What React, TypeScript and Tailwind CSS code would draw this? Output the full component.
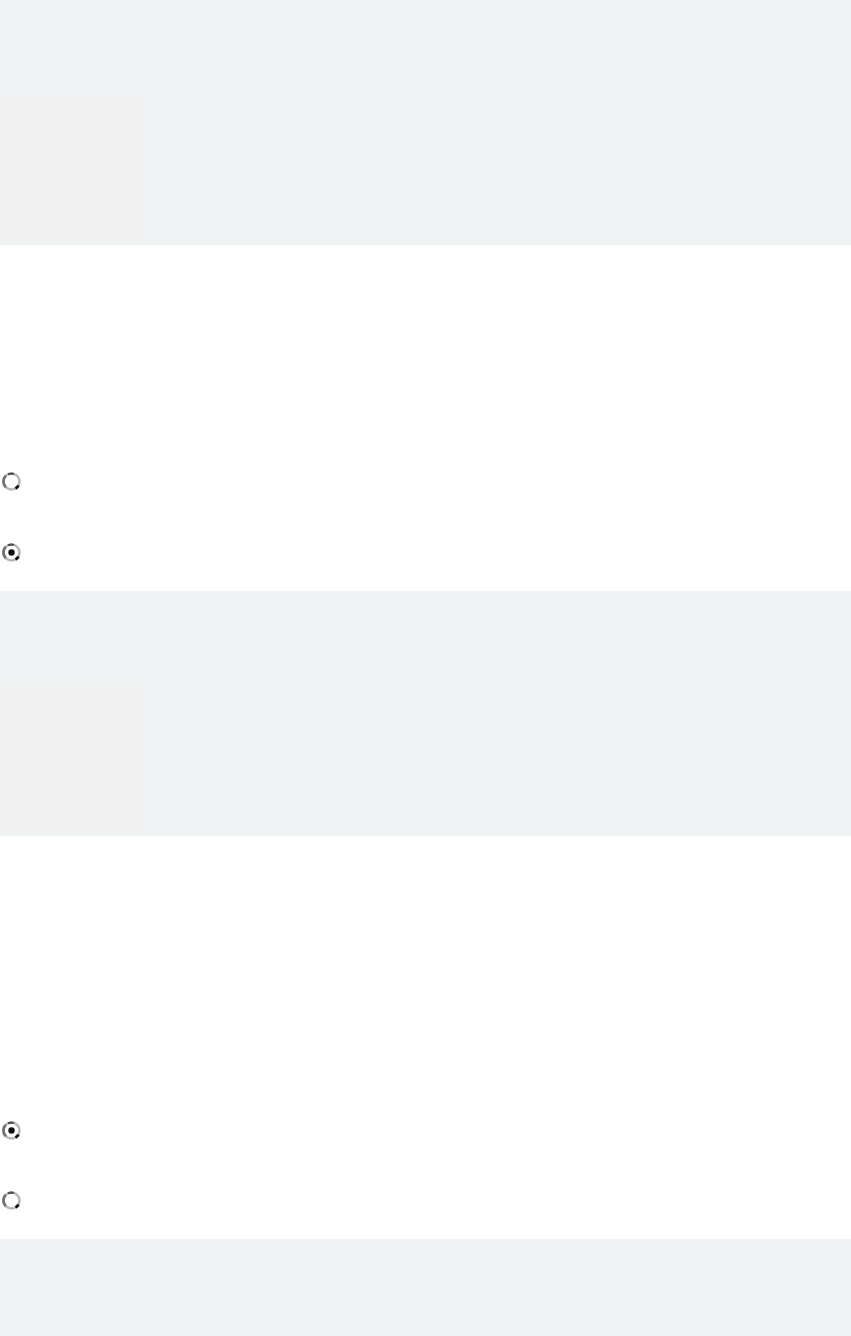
import React from "react";

function Radio({ checked }: { checked?: boolean }) {
  return (
    <svg width="21" height="21" viewBox="0 0 21 21" className="block">
      <circle cx="10.5" cy="10.5" r="8" fill="#fff" stroke="#b8b8b8" strokeWidth="2.5" />
      <path d="M4.8 4.8 A8 8 0 0 0 4.8 16.2" fill="none" stroke="#737373" strokeWidth="2.8" />
      <path d="M7 3.3 A8 8 0 0 1 13 3" fill="none" stroke="#505050" strokeWidth="2.2" />
      <path d="M14.5 17.5 A8 8 0 0 0 17.5 14.5" fill="none" stroke="#111" strokeWidth="2.8" />
      {checked && <circle cx="10.5" cy="10.5" r="3.2" fill="#111" />}
    </svg>
  );
}

function Band({ last }: { last?: boolean }) {
  return (
    <div className={`bg-[#eff3f4] pt-[96px] ${last ? "h-[97px]" : "h-[245px]"}`}>
      {!last && <div className="w-[144px] h-[144px] bg-[#f0f0f0]" />}
    </div>
  );
}

export default function App() {
  return (
    <div className="w-[851px] h-[1336px] bg-white overflow-hidden font-['Liberation_Sans',sans-serif]">
      <Band />
      <div className="bg-white h-[346px] flex flex-col gap-[50px] pl-[1px] pt-[226px]">
        <Radio />
        <Radio checked />
      </div>
      <Band />
      <div className="bg-white h-[403px] flex flex-col gap-[49px] pl-[1px] pt-[284px]">
        <Radio checked />
        <Radio />
      </div>
      <Band last />
    </div>
  );
}
